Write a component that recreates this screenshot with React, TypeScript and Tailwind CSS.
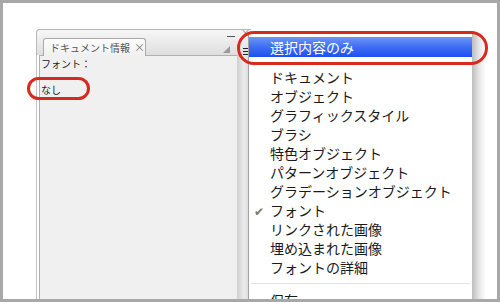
const items = [
  'ドキュメント',
  'オブジェクト',
  'グラフィックスタイル',
  'ブラシ',
  '特色オブジェクト',
  'パターンオブジェクト',
  'グラデーションオブジェクト',
  'フォント',
  'リンクされた画像',
  '埋め込まれた画像',
  'フォントの詳細',
]

export default function App() {
  return (
    <div
      className="relative h-[302px] w-[500px] overflow-hidden border-[3px] border-[#a8a8a8] bg-white text-[#1a1a1a]"
      style={{ fontFamily: '"Noto Sans CJK JP", "Noto Sans", sans-serif' }}
    >
      {/* panel */}
      <div className="ml-[33px] mt-[26px] flex h-[300px] w-[215px] flex-col">
        <div className="relative h-[26px] rounded-tl-[4px] border-l border-t border-[#b8b8b8] bg-gradient-to-b from-[#f7f7f7] to-[#dedede]">
          <div className="absolute bottom-[-1px] left-[6px] flex h-[18px] w-[103px] items-center gap-[4px] whitespace-nowrap rounded-t-[3px] border border-b-0 border-[#a9a9a9] bg-gradient-to-b from-[#fdfdfd] to-[#f0f0f0] pl-[6px] text-[10px] leading-none text-[#555]">
            <span className="shrink-0">ドキュメント情報</span>
            <span className="shrink-0 text-[11px] text-[#777]">×</span>
          </div>
          <div className="absolute left-[190px] top-[6px] h-[1px] w-[8px] bg-[#555]" />
          <div className="absolute left-[204px] top-[-2px] text-[9px] leading-none text-[#888]">×</div>
          <div className="absolute left-[186px] top-[16px] h-0 w-0 border-b-[7px] border-l-[7px] border-b-[#9a9a9a] border-l-transparent" />
          <div className="absolute left-[206px] top-[18px] flex w-[8px] flex-col gap-[2px]">
            <div className="h-[1px] bg-[#222]" />
            <div className="h-[1px] bg-[#222]" />
            <div className="h-[1px] bg-[#222]" />
          </div>
        </div>
        <div className="flex flex-1 border-l border-[#c2c2c2] pl-[2px]">
          <div className="flex-1 border-l border-t border-[#b0b0b0] bg-[#f0f0f0] pl-[1px] pt-[1px] text-[10px] leading-[13px] text-[#222]">
            <div>フォント：</div>
            <div className="mt-[13px]">なし</div>
          </div>
          <div className="w-[14px] bg-gradient-to-r from-[#cfcfcf] via-[#ececec] to-[#d3d3d3]" />
        </div>
      </div>

      {/* dropdown menu */}
      <div className="absolute left-[245px] top-[30px] flex h-[280px]">
        <div className="w-[224px] border-l border-[#a3a3a3] bg-white pt-[4px]">
          <div className="flex h-[20px] items-center bg-gradient-to-b from-[#6f95f8] via-[#3f6df3] to-[#1b4ff0] pl-[21px] text-[14px] leading-none text-white">
            選択内容のみ
          </div>
          <div className="mt-[11px] text-[14px] leading-[19px]">
            {items.map((t) => (
              <div key={t} className="relative flex h-[19px] items-center pl-[21px]">
                {t === 'フォント' && (
                  <span className="absolute left-[5px] text-[12px] text-[#777]">✔</span>
                )}
                {t}
              </div>
            ))}
          </div>
          <div className="mx-[2px] mt-[6px] h-[1px] bg-[#e2e2e2]" />
          <div className="mt-[7px] pl-[21px] text-[14px] leading-[19px]">保存</div>
        </div>
        <div className="w-[14px] bg-gradient-to-r from-[#bdbdbd] via-[#e6e6e6] to-white" />
      </div>

      {/* annotations */}
      <div className="absolute left-[24px] top-[74px] h-[23px] w-[63px] rounded-full border-[3px] border-[#d8291d]" />
      <div className="absolute left-[234px] top-[28px] h-[34px] w-[251px] rounded-[17px] border-[3px] border-[#d8291d]" />
    </div>
  )
}
